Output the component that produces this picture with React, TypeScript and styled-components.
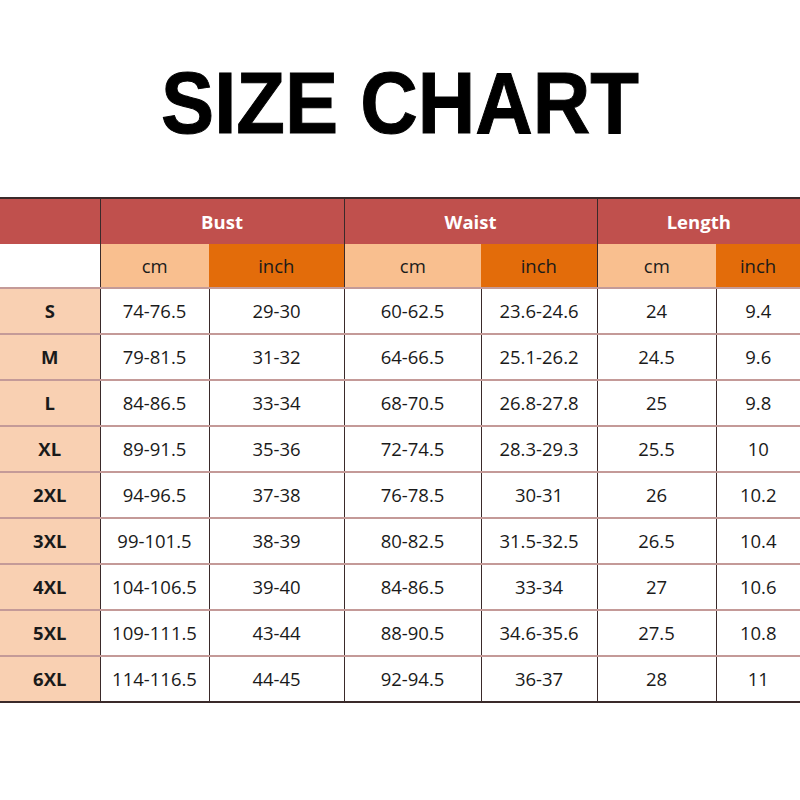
import styled, { createGlobalStyle } from "styled-components";

const GlobalStyle = createGlobalStyle`
  html, body {
    margin: 0;
    padding: 0;
    background: #fff;
  }
  body {
    width: 800px;
    height: 800px;
    overflow: hidden;
  }
`;

const Page = styled.div`
  width: 800px;
  height: 800px;
  background: #fff;
`;

const Title = styled.h1`
  margin: 0;
  padding-top: 59px;
  height: 197px;
  box-sizing: border-box;
  text-align: center;
  font-family: "Liberation Sans", Arial, sans-serif;
  font-weight: 700;
  font-size: 88px;
  line-height: 1;
  color: #000;
`;

const TitleText = styled.span`
  display: inline-block;
  transform: scaleX(0.905);
  -webkit-text-stroke: 1px #000;
`;

const Table = styled.table`
  width: 800px;
  border-collapse: collapse;
  table-layout: fixed;
  font-family: "Open Sans", "Liberation Sans", sans-serif;
  font-size: 18.5px;
  color: #1a1a1a;
  border-top: 2px solid #3a2a2a;
  border-bottom: 2px solid #3a2a2a;
`;

const GroupCell = styled.th<{ $first?: boolean }>`
  height: 45px;
  padding: 0;
  background: #c0504d;
  color: #fff;
  font-weight: 700;
  font-size: 18.5px;
  border-left: ${(p) => (p.$first ? "none" : "1px solid #3a2a2a")};
`;

const UnitCell = styled.th<{ $tone: "blank" | "light" | "dark"; $divider?: boolean }>`
  height: 43px;
  padding: 0;
  font-weight: 400;
  color: #1a1a1a;
  background: ${(p) =>
    p.$tone === "blank" ? "#fff" : p.$tone === "light" ? "#f9bf8f" : "#e36c0a"};
  border-left: ${(p) => (p.$divider ? "1px solid #3a2a2a" : "none")};
  border-bottom: 2px solid #c49a98;
`;

const SizeCell = styled.td`
  height: 42px;
  padding: 0 0 2px;
  text-align: center;
  font-weight: 700;
  background: #f9d0b2;
  border-bottom: 2px solid #c49a98;

  tr:last-child > & {
    border-bottom: none;
  }
`;

const ValueCell = styled.td`
  height: 42px;
  padding: 0 0 2px;
  text-align: center;
  background: #fff;
  border-left: 1px solid #3a2a2a;
  border-bottom: 2px solid #c49a98;

  tr:last-child > & {
    border-bottom: none;
  }
`;

const widths = [100, 109, 135, 137, 116, 119, 84];

const rows: string[][] = [
  ["S", "74-76.5", "29-30", "60-62.5", "23.6-24.6", "24", "9.4"],
  ["M", "79-81.5", "31-32", "64-66.5", "25.1-26.2", "24.5", "9.6"],
  ["L", "84-86.5", "33-34", "68-70.5", "26.8-27.8", "25", "9.8"],
  ["XL", "89-91.5", "35-36", "72-74.5", "28.3-29.3", "25.5", "10"],
  ["2XL", "94-96.5", "37-38", "76-78.5", "30-31", "26", "10.2"],
  ["3XL", "99-101.5", "38-39", "80-82.5", "31.5-32.5", "26.5", "10.4"],
  ["4XL", "104-106.5", "39-40", "84-86.5", "33-34", "27", "10.6"],
  ["5XL", "109-111.5", "43-44", "88-90.5", "34.6-35.6", "27.5", "10.8"],
  ["6XL", "114-116.5", "44-45", "92-94.5", "36-37", "28", "11"],
];

export default function App() {
  return (
    <Page>
      <GlobalStyle />
      <Title>
        <TitleText>SIZE CHART</TitleText>
      </Title>
      <Table>
        <colgroup>
          {widths.map((w, i) => (
            <col key={i} style={{ width: w }} />
          ))}
        </colgroup>
        <thead>
          <tr>
            <GroupCell $first />
            <GroupCell colSpan={2}>Bust</GroupCell>
            <GroupCell colSpan={2}>Waist</GroupCell>
            <GroupCell colSpan={2}>Length</GroupCell>
          </tr>
          <tr>
            <UnitCell $tone="blank" />
            <UnitCell $tone="light" $divider>cm</UnitCell>
            <UnitCell $tone="dark">inch</UnitCell>
            <UnitCell $tone="light" $divider>cm</UnitCell>
            <UnitCell $tone="dark">inch</UnitCell>
            <UnitCell $tone="light" $divider>cm</UnitCell>
            <UnitCell $tone="dark">inch</UnitCell>
          </tr>
        </thead>
        <tbody>
          {rows.map((r) => (
            <tr key={r[0]}>
              <SizeCell>{r[0]}</SizeCell>
              {r.slice(1).map((v, i) => (
                <ValueCell key={i}>{v}</ValueCell>
              ))}
            </tr>
          ))}
        </tbody>
      </Table>
    </Page>
  );
}
